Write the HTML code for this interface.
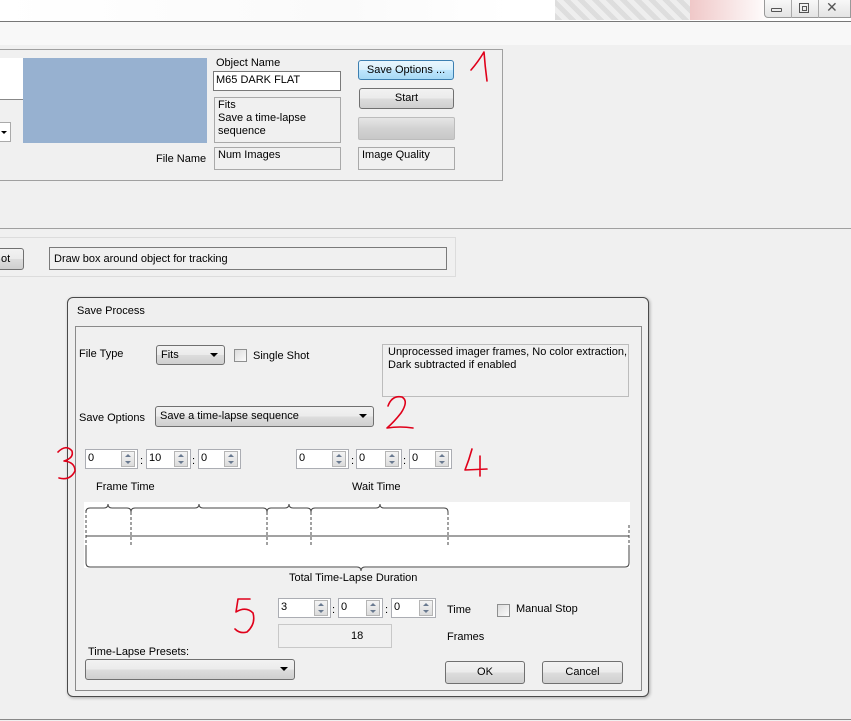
<!DOCTYPE html>
<html><head><meta charset="utf-8"><style>
*{box-sizing:border-box;margin:0;padding:0}
body{width:851px;height:721px;overflow:hidden;background:#f0f0f0;font-family:"Liberation Sans",sans-serif;font-size:11px;color:#000;position:relative}
.a{position:absolute}
.t{position:absolute;white-space:nowrap;font-size:11px;line-height:13px}
.box{position:absolute;border:1px solid #a9a9a9;background:#f0f0f0}
.tb{position:absolute;border:1px solid #7a7a7a;background:#fff}
.btn{position:absolute;border:1px solid #707070;border-radius:3px;background:linear-gradient(#f2f2f2 0%,#ebebeb 50%,#dddddd 51%,#cfcfcf 100%);text-align:center;font-size:11px}
.combo{position:absolute;border:1px solid #707070;border-radius:3px;background:linear-gradient(#f2f2f2 0%,#ebebeb 50%,#dddddd 51%,#cfcfcf 100%)}
.combo span{position:absolute;left:4px;top:3px;font-size:11px}
.arr{position:absolute;right:6px;top:7px;width:0;height:0;border-left:4px solid transparent;border-right:4px solid transparent;border-top:4px solid #000}
.sp{position:absolute;height:20px;border:1px solid #abadb3;background:#fff}
.sp span{position:absolute;left:2px;top:2px;font-size:11px}
.sb{position:absolute;right:2px;top:1px;width:14px;height:16px;border:1px solid #b5b5b5;background:linear-gradient(#f4f4f4,#dcdcdc)}
.sb:before{content:"";position:absolute;left:3px;top:2px;border-left:3px solid transparent;border-right:3px solid transparent;border-bottom:3px solid #6a7a90}
.sb:after{content:"";position:absolute;left:3px;top:9px;border-left:3px solid transparent;border-right:3px solid transparent;border-top:3px solid #6a7a90}
.col{position:absolute;font-size:11px}
.cb{position:absolute;width:13px;height:13px;border:1px solid #8e8f8f;background:linear-gradient(135deg,#dcdcdc,#fbfbfb)}
</style></head><body>
<div class="a" style="left:0;top:0;width:851px;height:21px;background:linear-gradient(90deg,#fff 0%,#fafafa 40%,#fff 60%,#fff 100%)"></div>
<div class="a" style="left:555px;top:0;width:135px;height:20px;background:repeating-linear-gradient(45deg,#cfcfcf 0 5px,#e6e6e6 5px 10px);opacity:.7"></div>
<div class="a" style="left:690px;top:0;width:80px;height:20px;background:linear-gradient(90deg,#f0c8c8,#fff)"></div>
<div class="a" style="left:764px;top:0;width:87px;height:18px;border:1px solid #999;border-top:none;border-radius:0 0 0 4px;background:linear-gradient(#f8f8f8,#e4e4e4)"></div>
<div class="a" style="left:791px;top:0;width:1px;height:18px;background:#aaa"></div>
<div class="a" style="left:818px;top:0;width:1px;height:18px;background:#aaa"></div>
<div class="a" style="left:771px;top:8px;width:11px;height:4px;border:1px solid #555;border-radius:1px"></div>
<div class="a" style="left:799px;top:3px;width:10px;height:10px;border:1px solid #555"></div>
<div class="a" style="left:802px;top:6px;width:5px;height:5px;border:1px solid #555"></div>
<div class="t" style="left:826px;top:1px;font-size:14px;color:#555">✕</div>
<div class="a" style="left:0;top:21px;width:851px;height:1px;background:#777"></div>
<div class="a" style="left:0;top:22px;width:851px;height:23px;background:#f8f8f8"></div>

<div class="a" style="left:-2px;top:49px;width:505px;height:132px;border:1px solid #a0a0a0;background:#f0f0f0"></div>
<div class="a" style="left:0;top:58px;width:23px;height:42px;background:#fff;border-bottom:1px solid #888"></div>
<div class="a" style="left:0;top:122px;width:11px;height:20px;background:#fff;border:1px solid #aaa;border-left:none"></div>
<div class="a" style="left:1px;top:131px;border-left:3px solid transparent;border-right:3px solid transparent;border-top:3px solid #000"></div>
<div class="a" style="left:23px;top:58px;width:184px;height:85px;background:#97b1d0"></div>
<div class="t" style="left:216px;top:57px">Object Name</div>
<div class="tb" style="left:213px;top:71px;width:128px;height:20px"><span class="t" style="left:2px;top:2px">M65 DARK FLAT</span></div>
<div class="box" style="left:214px;top:97px;width:127px;height:46px"></div>
<div class="t" style="left:218px;top:99px">Fits</div>
<div class="t" style="left:218px;top:112px">Save a time-lapse</div>
<div class="t" style="left:218px;top:125px">sequence</div>
<div class="t" style="left:156px;top:153px">File Name</div>
<div class="box" style="left:214px;top:147px;width:127px;height:23px"><span class="t" style="left:3px;top:1px">Num Images</span></div>
<div class="btn" style="left:358px;top:60px;width:96px;height:20px;border-color:#3c7fb1;background:linear-gradient(#eaf6fd,#d9f0fc 50%,#bee6fd 51%,#a7d9f5)"><span class="t" style="position:relative;top:3px">Save Options ...</span></div>
<div class="btn" style="left:359px;top:88px;width:95px;height:21px"><span class="t" style="position:relative;top:3px">Start</span></div>
<div class="a" style="left:358px;top:117px;width:97px;height:23px;border:1px solid #bcbcbc;border-radius:2px;background:linear-gradient(#e6e6e6,#d2d2d2 50%,#c8c8c8)"></div>
<div class="box" style="left:358px;top:147px;width:97px;height:23px"><span class="t" style="left:3px;top:1px">Image Quality</span></div>

<div class="a" style="left:0;top:228px;width:851px;height:1px;background:#a0a0a0"></div>
<div class="a" style="left:-2px;top:237px;width:458px;height:40px;border:1px solid #dcdcdc"></div>
<div class="btn" style="left:-5px;top:248px;width:29px;height:22px"><span class="t" style="position:absolute;left:5px;top:4px">ot</span></div>
<div class="a" style="left:49px;top:247px;width:398px;height:23px;border:1px solid #7a7a7a"><span class="t" style="left:4px;top:5px">Draw box around object for tracking</span></div>

<div class="a" style="left:67px;top:297px;width:582px;height:400px;border:1px solid #4a4a4a;border-radius:6px;background:#efefef;box-shadow:1px 1px 3px rgba(0,0,0,.3)"></div>
<div class="t" style="left:77px;top:305px">Save Process</div>
<div class="a" style="left:75px;top:326px;width:567px;height:365px;border:1px solid #8a8a8a;background:#f0f0f0"></div>

<div class="t" style="left:79px;top:348px">File Type</div>
<div class="combo" style="left:156px;top:345px;width:69px;height:20px"><span>Fits</span><div class="arr"></div></div>
<div class="cb" style="left:234px;top:349px"></div>
<div class="t" style="left:253px;top:350px">Single Shot</div>
<div class="box" style="left:382px;top:344px;width:247px;height:53px;border-color:#bcbcbc"></div>
<div class="t" style="left:388px;top:346px">Unprocessed imager frames, No color extraction,</div>
<div class="t" style="left:388px;top:359px">Dark subtracted if enabled</div>

<div class="t" style="left:79px;top:412px">Save Options</div>
<div class="combo" style="left:155px;top:406px;width:219px;height:21px"><span>Save a time-lapse sequence</span><div class="arr"></div></div>

<div class="sp" style="left:85px;top:449px;width:53px"><span>0</span><div class="sb"></div></div>
<div class="col" style="left:140px;top:455px">:</div>
<div class="sp" style="left:146px;top:449px;width:45px"><span>10</span><div class="sb"></div></div>
<div class="col" style="left:192px;top:455px">:</div>
<div class="sp" style="left:198px;top:449px;width:43px"><span>0</span><div class="sb"></div></div>

<div class="sp" style="left:296px;top:449px;width:53px"><span>0</span><div class="sb"></div></div>
<div class="col" style="left:351px;top:455px">:</div>
<div class="sp" style="left:356px;top:449px;width:46px"><span>0</span><div class="sb"></div></div>
<div class="col" style="left:403px;top:455px">:</div>
<div class="sp" style="left:409px;top:449px;width:43px"><span>0</span><div class="sb"></div></div>

<div class="t" style="left:96px;top:481px">Frame Time</div>
<div class="t" style="left:352px;top:481px">Wait Time</div>

<svg class="a" style="left:84px;top:502px" width="546" height="74" viewBox="84 502 546 74">
<rect x="84" y="502" width="546" height="66" fill="#fff"/>
<g fill="none" stroke="#444" stroke-width="1">
<line x1="86" y1="536" x2="629" y2="536"/>
<path d="M86 512 Q86 508 90 508 L104 508 Q108 508 108 504 Q108 508 112 508 L127 508 Q131 508 131 512"/>
<path d="M131 512 Q131 508 135 508 L195 508 Q199 508 199 504 Q199 508 203 508 L263 508 Q267 508 267 512"/>
<path d="M267 512 Q267 508 271 508 L285 508 Q289 508 289 504 Q289 508 293 508 L307 508 Q311 508 311 512"/>
<path d="M311 512 Q311 508 315 508 L376 508 Q380 508 380 504 Q380 508 384 508 L444 508 Q448 508 448 512"/>
<path d="M86 546 L86 563 Q86 567 90 567 L357 567 Q361 567 361 571 Q361 567 365 567 L625 567 Q629 567 629 563 L629 546"/>
<g stroke-dasharray="3,2"><line x1="86" y1="510" x2="86" y2="546"/><line x1="131" y1="512" x2="131" y2="546"/><line x1="267" y1="512" x2="267" y2="546"/><line x1="311" y1="512" x2="311" y2="546"/><line x1="448" y1="512" x2="448" y2="546"/><line x1="629" y1="525" x2="629" y2="546"/></g>
</g></svg>
<div class="t" style="left:289px;top:572px">Total Time-Lapse Duration</div>

<div class="sp" style="left:278px;top:598px;width:53px"><span>3</span><div class="sb"></div></div>
<div class="col" style="left:332px;top:604px">:</div>
<div class="sp" style="left:338px;top:598px;width:45px"><span>0</span><div class="sb"></div></div>
<div class="col" style="left:385px;top:604px">:</div>
<div class="sp" style="left:391px;top:598px;width:45px"><span>0</span><div class="sb"></div></div>
<div class="t" style="left:447px;top:604px">Time</div>
<div class="cb" style="left:497px;top:604px"></div>
<div class="t" style="left:516px;top:603px">Manual Stop</div>
<div class="box" style="left:278px;top:624px;width:114px;height:24px;border-color:#c8c8c8"><span class="t" style="left:72px;top:5px">18</span></div>
<div class="t" style="left:447px;top:631px">Frames</div>

<div class="t" style="left:88px;top:646px">Time-Lapse Presets:</div>
<div class="combo" style="left:85px;top:659px;width:210px;height:21px"><div class="arr"></div></div>
<div class="btn" style="left:445px;top:661px;width:80px;height:23px"><span class="t" style="position:relative;top:4px">OK</span></div>
<div class="btn" style="left:542px;top:661px;width:81px;height:23px"><span class="t" style="position:relative;top:4px">Cancel</span></div>

<div class="a" style="left:0;top:719px;width:851px;height:1px;background:#888"></div>

<svg class="a" style="left:0;top:0" width="851" height="721"><g fill="none" stroke="#e0001a" stroke-width="1.6" stroke-linecap="round" stroke-linejoin="round">
<path d="M471 70 Q478 62 484 52 Q485 66 487 81"/>
<path d="M388 406 Q392 395 402 397 Q409 401 401 413 Q394 422 387 428 Q400 426 413 428"/>
<path d="M58 452 Q66 444 72 451 Q74 458 64 461 Q75 462 75 471 Q70 481 59 478"/>
<path d="M472 449 Q469 460 465 470 L487 469 M480 456 L480 476"/>
<path d="M250 599 L238 599 L236 612 Q246 606 253 613 Q256 624 247 632 Q240 634 235 629"/>
</g></svg>
</body></html>
